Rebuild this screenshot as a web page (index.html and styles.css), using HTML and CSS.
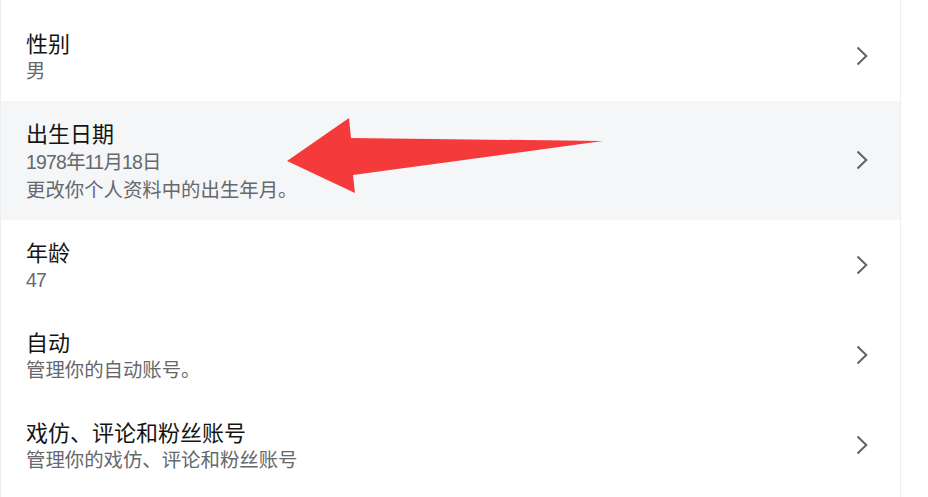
FILE: index.html
```html
<!DOCTYPE html>
<html lang="zh-CN">
<head>
<meta charset="utf-8">
<title>个人资料</title>
<link rel="stylesheet" href="styles.css">
</head>
<body>
<div class="panel">
  <div class="row">
    <div class="text">
      <div class="title">性别</div>
      <div class="sub">男</div>
    </div>
    <svg class="chev" viewBox="0 0 12 20" width="12" height="20"><path d="M1.5 1.5 L10.3 10 L1.5 18.5"/></svg>
  </div>
  <div class="row active">
    <div class="text">
      <div class="title">出生日期</div>
      <div class="sub date">1978年11月18日</div>
      <div class="sub">更改你个人资料中的出生年月。</div>
    </div>
    <svg class="chev" viewBox="0 0 12 20" width="12" height="20"><path d="M1.5 1.5 L10.3 10 L1.5 18.5"/></svg>
  </div>
  <div class="row">
    <div class="text">
      <div class="title">年龄</div>
      <div class="sub date">47</div>
    </div>
    <svg class="chev" viewBox="0 0 12 20" width="12" height="20"><path d="M1.5 1.5 L10.3 10 L1.5 18.5"/></svg>
  </div>
  <div class="row">
    <div class="text">
      <div class="title">自动</div>
      <div class="sub">管理你的自动账号。</div>
    </div>
    <svg class="chev" viewBox="0 0 12 20" width="12" height="20"><path d="M1.5 1.5 L10.3 10 L1.5 18.5"/></svg>
  </div>
  <div class="row">
    <div class="text">
      <div class="title">戏仿、评论和粉丝账号</div>
      <div class="sub">管理你的戏仿、评论和粉丝账号</div>
    </div>
    <svg class="chev" viewBox="0 0 12 20" width="12" height="20"><path d="M1.5 1.5 L10.3 10 L1.5 18.5"/></svg>
  </div>
</div>
<svg class="annot" viewBox="0 0 928 497" width="928" height="497">
  <polygon points="287,161 349,118 351,138 603,141 353,175 355,193"/>
</svg>
</body>
</html>
```
FILE: styles.css
```css
html, body {
  margin: 0;
  padding: 0;
  background: #ffffff;
}
body {
  width: 928px;
  height: 497px;
  overflow: hidden;
  position: relative;
  font-family: "Liberation Sans", "Noto Sans CJK SC", sans-serif;
}
.panel {
  box-sizing: border-box;
  width: 901px;
  height: 497px;
  padding-top: 11px;
  border-left: 1px solid #eeeeee;
  border-right: 1px solid #eeeff0;
}
.row {
  display: flex;
  align-items: center;
  padding: 0 32px 0 25px;
}
.row.active {
  background: #f5f6f7;
}
.text {
  flex: 1;
  padding: 21px 0 16px;
}
.title {
  font-size: 22px;
  line-height: 25.3px;
  color: #141414;
}
.sub {
  font-size: 19.4px;
  line-height: 28px;
  color: #65686d;
}
.sub.date {
  letter-spacing: -0.75px;
}
.chev {
  flex: none;
  fill: none;
  stroke: #5f6368;
  stroke-width: 2;
}
.annot {
  position: absolute;
  left: 0;
  top: 0;
  pointer-events: none;
}
.annot polygon {
  fill: #f43a3a;
}
```
